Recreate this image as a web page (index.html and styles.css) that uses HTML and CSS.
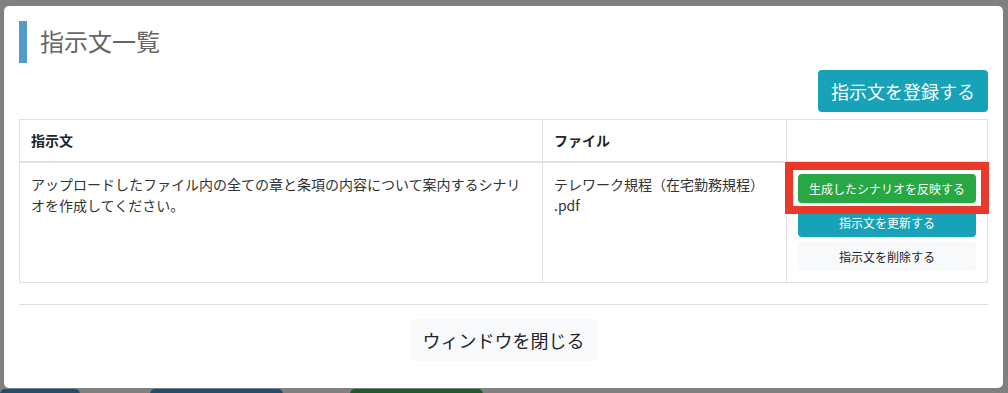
FILE: index.html
```html
<!DOCTYPE html>
<html lang="ja">
<head>
  <meta charset="UTF-8">
  <meta name="viewport" content="width=device-width, initial-scale=1.0">
  <title>指示文一覧</title>
  <link rel="stylesheet" href="styles.css">
</head>
<body>
  <div class="modal">
    <h2 class="modal-title">指示文一覧</h2>

    <div class="toolbar">
      <button class="btn btn-info btn-lg">指示文を登録する</button>
    </div>

    <table class="prompt-table">
      <thead>
        <tr>
          <th class="col-text">指示文</th>
          <th class="col-file">ファイル</th>
          <th class="col-actions"></th>
        </tr>
      </thead>
      <tbody>
        <tr>
          <td>アップロードしたファイル内の全ての章と条項の内容について案内するシナリオを作成してください。</td>
          <td>テレワーク規程（在宅勤務規程）<wbr>.pdf</td>
          <td>
            <div class="actions">
              <div class="highlight">
                <button class="btn btn-success btn-sm">生成したシナリオを反映する</button>
              </div>
              <button class="btn btn-info btn-sm">指示文を更新する</button>
              <button class="btn btn-light btn-sm">指示文を削除する</button>
            </div>
          </td>
        </tr>
      </tbody>
    </table>

    <hr class="divider">

    <div class="modal-footer">
      <button class="btn btn-light btn-lg btn-close">ウィンドウを閉じる</button>
    </div>
  </div>

  <div class="backdrop-strip">
    <span class="peek peek-blue1"></span>
    <span class="peek peek-blue2"></span>
    <span class="peek peek-green"></span>
  </div>
</body>
</html>
```

FILE: styles.css
```css
html, body {
  height: 100%;
}
body {
  margin: 0;
  background-color: #808080;
  font-family: "Noto Sans CJK JP", "Noto Sans", sans-serif;
  color: #212529;
  overflow: hidden;
}
.modal {
  margin: 6px 5px 0 4px;
  height: 382px;
  box-sizing: border-box;
  padding: 15px 15px 0 15px;
  background-color: #fff;
  border-radius: 5px;
}
.modal-title {
  margin: 0;
  height: 42px;
  line-height: 40px;
  border-left: 8px solid #519cc7;
  padding-left: 13px;
  font-size: 24px;
  font-weight: normal;
  color: #666;
}
.toolbar {
  display: flex;
  justify-content: flex-end;
  margin-top: 7px;
  margin-bottom: 7px;
}
.btn {
  font-family: inherit;
  border: 1px solid transparent;
  border-radius: 4px;
  cursor: pointer;
  line-height: 1.5;
}
.btn-lg {
  font-size: 18px;
  padding: 6px 12px;
  height: 42px;
}
.btn-close {
  padding: 6px 11px;
}
.btn-sm {
  font-size: 12px;
  padding: 0 8px;
  height: 29px;
  width: 100%;
}
.btn-info {
  background-color: #17a2b8;
  color: #fff;
}
.btn-success {
  background-color: #28a745;
  color: #fff;
}
.btn-light {
  background-color: #f8f9fa;
  color: #212529;
}
.prompt-table {
  width: 100%;
  border-collapse: collapse;
  font-size: 14px;
  line-height: 21px;
}
.prompt-table th, .prompt-table td {
  border: 1px solid #dee2e6;
  padding: 11px 11px;
  text-align: left;
  vertical-align: top;
}
.prompt-table th {
  height: 20px;
  padding-top: 10px;
  padding-bottom: 10px;
  border-bottom: 2px solid #dee2e6;
  font-weight: bold;
}
.col-text {
  width: 500px;
}
.col-file {
  width: 221px;
}
.prompt-table td {
  height: 95px;
  color: #333;
}
.actions {
  display: flex;
  flex-direction: column;
  gap: 5px;
}
.highlight {
  position: relative;
  z-index: 1;
  display: flex;
}
/* annotation frame drawn over the row */
.highlight::after {
  content: "";
  position: absolute;
  top: -12px;
  left: -13px;
  right: -13px;
  bottom: -11px;
  border: 8px solid #e8392b;
  pointer-events: none;
}
.divider {
  margin: 21px 0 14px 0;
  border: 0;
  border-top: 1px solid #ddd;
}
.modal-footer {
  display: flex;
  justify-content: center;
}
.backdrop-strip {
  position: relative;
  margin-top: 1px;
  height: 10px;
}
.peek {
  position: absolute;
  top: 0;
  height: 10px;
  border-radius: 5px 5px 0 0;
}
.peek-blue1 {
  left: 0;
  width: 80px;
  background-color: #1f4e6e;
}
.peek-blue2 {
  left: 150px;
  width: 133px;
  background-color: #1f4e6e;
}
.peek-green {
  left: 350px;
  width: 133px;
  background-color: #1e5a2c;
}
```
